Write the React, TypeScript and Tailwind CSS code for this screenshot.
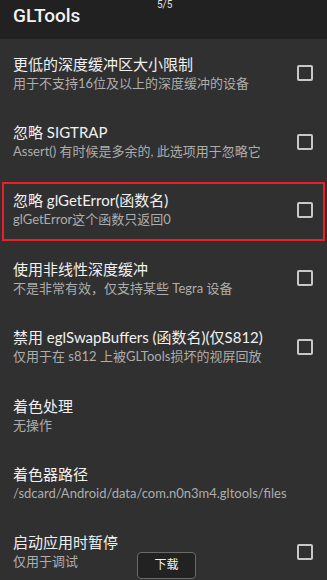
import React from "react";

type Item = { title: string; sub: string; check: boolean; highlight?: boolean; button?: boolean };

const items: Item[] = [
  { title: "更低的深度缓冲区大小限制", sub: "用于不支持16位及以上的深度缓冲的设备", check: true },
  { title: "忽略 SIGTRAP", sub: "Assert() 有时候是多余的, 此选项用于忽略它", check: true },
  { title: "忽略 glGetError(函数名)", sub: "glGetError这个函数只返回0", check: true, highlight: true },
  { title: "使用非线性深度缓冲", sub: "不是非常有效，仅支持某些 Tegra 设备", check: true },
  { title: "禁用 eglSwapBuffers (函数名)(仅S812)", sub: "仅用于在 s812 上被GLTools损坏的视屏回放", check: true },
  { title: "着色处理", sub: "无操作", check: false },
  { title: "着色器路径", sub: "/sdcard/Android/data/com.n0n3m4.gltools/files", check: false },
  { title: "启动应用时暂停", sub: "仅用于调试", check: true, button: true },
];

export default function App() {
  return (
    <div
      className="w-[327px] h-[580px] overflow-hidden bg-[#303030] relative"
      style={{ fontFamily: 'Lato, "Noto Sans CJK SC", sans-serif' }}
    >
      <div className="h-[39px] bg-[#212121] relative flex items-center px-[13px]">
        <span
          className="text-[19px] font-medium text-[#f2f2f2] leading-none -mt-[8px]"
          style={{ fontFamily: 'Roboto, "Noto Sans", sans-serif' }}
        >
          GLTools
        </span>
        <span
          className="absolute left-[157px] top-0 text-[10px] leading-[10px] text-[#e0e0e0]"
          style={{ fontFamily: 'Roboto, sans-serif' }}
        >
          5/5
        </span>
      </div>
      {items.map((it, i) => (
        <div key={i} className="h-[68.4px] relative flex items-center pl-[13px] pr-[14px]">
          {it.highlight && (
            <div className="absolute left-[2px] right-[2px] top-[6px] bottom-[3px] border-2 border-[#e8202a] pointer-events-none" />
          )}
          <div className="flex-1 flex flex-col">
            <div className="text-[15px] leading-[20px] text-[#f0f0f0] whitespace-nowrap">{it.title}</div>
            <div className="text-[13px] leading-[19px] text-[#adadad] whitespace-nowrap">{it.sub}</div>
          </div>
          {it.check && (
            <div className="w-[16px] h-[16px] border-2 border-[#c8c8c8] rounded-[2px] shrink-0" />
          )}
          {it.button && (
            <div className="absolute left-[137px] top-[34px] w-[59px] h-[27px] rounded-[4px] border border-[#6a6a6a] bg-[#222222] flex items-center justify-center text-[12px] text-[#f0f0f0]">
              下载
            </div>
          )}
        </div>
      ))}
    </div>
  );
}
